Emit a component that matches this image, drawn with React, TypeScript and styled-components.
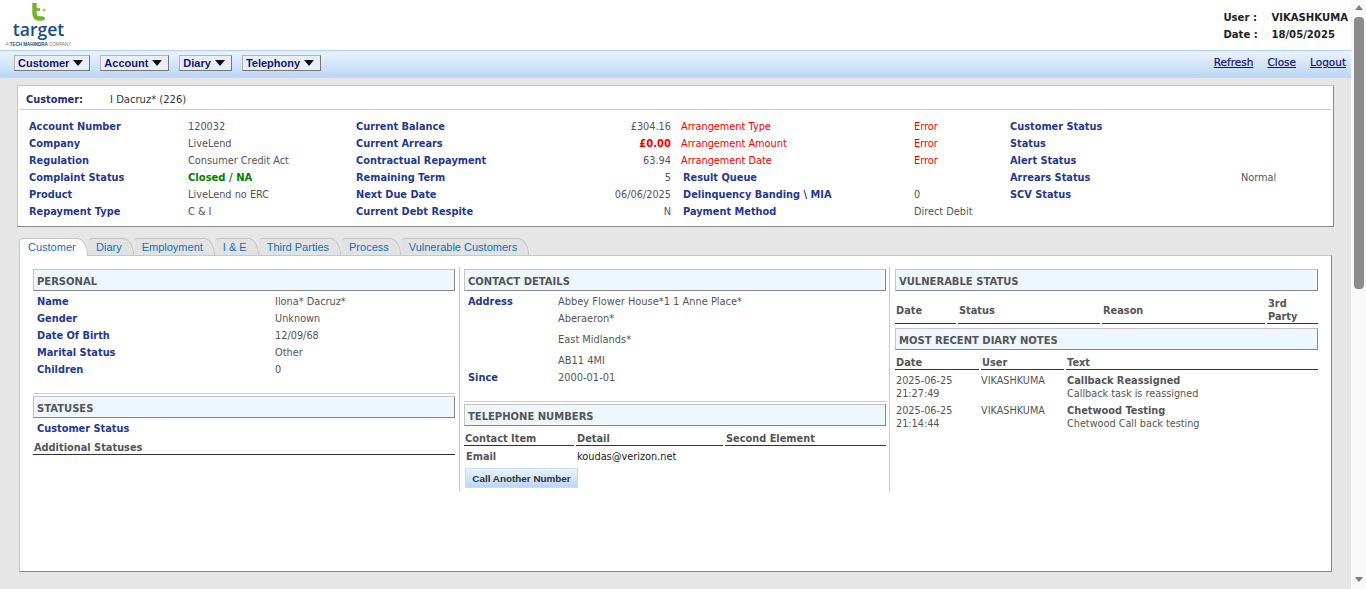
import React from "react";
import styled, { createGlobalStyle } from "styled-components";

const Global = createGlobalStyle`
  html, body { margin: 0; padding: 0; height: 589px; overflow: hidden; background: #fff; }
  #root { height: 589px; }
  * { box-sizing: border-box; }
`;
const F = `Tahoma, "DejaVu Sans", sans-serif`;

const Shell = styled.div`display: flex; height: 589px; width: 1366px; font-family: ${F}; font-size: 9.8px; color: #555;`;
const Main = styled.div`width: 1351px; display: flex; flex-direction: column; background: #e6e6e6;`;
const Scroll = styled.div`width: 15px; background: #f9f9f9; display: flex; flex-direction: column; align-items: center; padding: 5px 0 7px 0;`;
const Thumb = styled.div`width: 10px; height: 272px; margin-top: 7px; background: #8c8c8c; border-radius: 4px; flex: none;`;
const Arrow = styled.div<{ $down?: boolean }>`
  width: 0; height: 0; border-left: 4.5px solid transparent; border-right: 4.5px solid transparent;
  ${p => (p.$down ? "border-top: 5px solid #7c7c7c; margin-top: auto;" : "border-bottom: 5px solid #7c7c7c;")}
`;

const Head = styled.div`height: 50px; background: #fff; display: flex; justify-content: space-between; flex: none;`;
const Logo = styled.div`width: 77px; height: 50px; padding-top: 3px; display: flex; flex-direction: column; align-items: center;`;
const LogoWord = styled.div`font-family: "Open Sans", sans-serif; font-weight: 600; font-size: 17.5px; line-height: 17px; color: #16507f;`;
const LogoTag = styled.div`font-family: "Liberation Sans", sans-serif; font-size: 4.5px; line-height: 6px; color: #777; white-space: nowrap; margin-top: 4px; b { color: #16507f; }`;
const UserInfo = styled.div`padding: 9px 3px 0 0; display: grid; grid-template-columns: 36px 12px auto; grid-auto-rows: 17px; align-items: center; font-size: 10.1px; font-weight: 700; color: #222; white-space: nowrap;`;

const Nav = styled.div`height: 28px; background: linear-gradient(#eaf3fd, #bcd6f6); border-top: 1px solid #b2d0f5; display: flex; align-items: flex-start; justify-content: space-between; padding: 4px 5px 0 14px; flex: none;`;
const Menus = styled.div`display: flex; gap: 10px;`;
const Menu = styled.div`height: 16px; display: flex; align-items: center; gap: 4px; padding: 0 6px 0 3px; font: 700 11px "Liberation Sans", sans-serif; color: #14146e; background: #e8effa; border: 1px solid #b4b4b4; border-right-color: #777; border-bottom-color: #777;`;
const Tri = styled.span`width: 0; height: 0; border-left: 5px solid transparent; border-right: 5px solid transparent; border-top: 6px solid #111;`;
const Links = styled.div`display: flex; gap: 14px; padding-top: 1px;`;
const NavLink = styled.a`font: 400 10.5px ${F}; color: #14146e; text-decoration: underline; -webkit-text-stroke: 0.2px #14146e;`;

const Summary = styled.section`margin: 7px 17px 0 17px; height: 142px; background: #fff; border: 1px solid #c8c8c8; border-right-color: #888; border-bottom-color: #888; flex: none; padding: 0 2px;`;
const SumHead = styled.div`height: 24px; padding: 3px 0 0 6px; border-bottom: 1px solid #ccc; display: grid; grid-template-columns: 84px auto; justify-content: start; align-items: center; font-size: 10px; color: #333; b { color: #1e2f6e; font-size: 9.8px; }`;
const SumGrid = styled.div`display: grid; grid-template-columns: 159px 168px 232px 83px 243px 96px 231px 60px; padding: 8px 0 0 9px; grid-auto-rows: 17px; align-items: center; white-space: nowrap;`;
const L = styled.div<{ $pad?: number }>`font-weight: 700; color: #24398c; font-size: 9.8px; padding-left: ${p => p.$pad ?? 0}px;`;
const V = styled.div<{ $c?: string; $b?: boolean; $r?: boolean; $pad?: number }>`color: ${p => p.$c ?? "#555"}; font-weight: ${p => (p.$b ? 700 : 400)}; text-align: ${p => (p.$r ? "right" : "left")}; padding-left: ${p => p.$pad ?? 0}px; font-size: ${p => (p.$b ? 10 : 9.75)}px;`;

const Tabs = styled.div`display: flex; margin: 11px 0 0 19px; height: 17px; align-items: flex-end; flex: none; position: relative; z-index: 1;`;
const Tab = styled.div<{ $on?: boolean }>`
  font: 11px "Liberation Sans", sans-serif; color: #0a72c2; height: ${p => (p.$on ? 18 : 17)}px; display: flex; align-items: center;
  padding: ${p => (p.$on ? "0 11px 1px 8px" : "0 11px 1px 7px")}; background: ${p => (p.$on ? "#fff" : "#e2e2e2")};
  border: 1px solid #c6c6c6; border-left-color: ${p => (p.$on ? "#c6c6c6" : "transparent")}; border-bottom: none; border-radius: 4px 11px 0 0 / 4px 17px 0 0;
  ${p => (p.$on ? "margin-bottom:-1px; width: 69px;" : "")}
`;
const Panel = styled.section`margin: 0 19px; height: 317px; background: #fff; border: 1px solid #c8c8c8; border-right-color: #888; border-bottom-color: #888; padding: 13px 0 0 13px; display: grid; grid-template-columns: 426px 430px 429px; align-items: start; flex: none;`;
const Col = styled.div`height: 223px; padding-right: 4px;`;
const LineCol = styled.div<{ $l: number; $r: number }>`height: 225px; margin-top: -2px; padding: 2px ${p => p.$r}px 0 ${p => p.$l}px; border-left: 1px solid #ccc;`;
const SecTitle = styled.div<{ $mt?: number }>`height: 22px; margin-top: ${p => p.$mt ?? 0}px; padding: 2px 0 0 3px; line-height: 20px; background: #eef6fe; border: 1px solid #c4c4c4; border-right-color: #888; border-bottom-color: #888; font-weight: 700; font-size: 10px; color: #555;`;
const Row = styled.div<{ $w?: number; $pad?: number; $mt?: number }>`display: grid; grid-template-columns: ${p => p.$w ?? 238}px 1fr; height: 17px; align-items: center; padding-left: ${p => p.$pad ?? 4}px; margin-top: ${p => p.$mt ?? 0}px;`;
const Rows = styled.div`padding-top: 2px;`;
const Rule = styled.div<{ $mt?: number }>`border-top: 1px solid #ccc; margin-top: ${p => p.$mt ?? 15}px; padding-top: 2px;`;
const Ths = styled.div<{ $cols: string; $h?: number; $mt?: number }>`display: grid; grid-template-columns: ${p => p.$cols}; gap: 2px; height: ${p => p.$h ?? 20}px; margin-top: ${p => p.$mt ?? 0}px;`;
const Th = styled.div<{ $mid?: boolean }>`border-bottom: 1px solid #333; font-weight: 700; font-size: 9.8px; color: #555; line-height: 13px; ${p => (p.$mid ? "display: flex; align-items: center;" : "display: flex; align-items: flex-end;")} padding-left: 1px;`;
const ThStack = styled.span`display: block;`;
const RowHead = styled.span`font-weight: 700; font-size: 9.8px; color: #555;`;
const Note = styled.div`display: grid; grid-template-columns: 85px 86px 1fr; line-height: 13px; margin-top: 4px; color: #555; padding-left: 1px; font-size: 9.7px; b { font-size: 9.8px; }`;
const CallBtn = styled.button`display: block; margin: 3px 0 0 1px; width: 113px; height: 20px; padding: 0; border: 1px solid #c9dcf7; background: linear-gradient(#eaf3fd, #bcd6f6); font: 700 9.9px "Liberation Sans", sans-serif; color: #333;`;
const Addr = styled.div`display: grid; grid-template-columns: 90px 1fr; padding: 2px 0 0 4px;`;
const AddrLine = styled.div<{ $h?: number }>`height: ${p => p.$h ?? 17}px; display: flex; align-items: center; font-size: 9.85px;`;
const TinyMark = styled.svg`display: block; margin-left: 2px;`;

const sumRows = [
  ["Account Number","120032","Current Balance","£304.16","Arrangement Type","Error","Customer Status",""],
  ["Company","LiveLend","Current Arrears","£0.00","Arrangement Amount","Error","Status",""],
  ["Regulation","Consumer Credit Act","Contractual Repayment","63.94","Arrangement Date","Error","Alert Status",""],
  ["Complaint Status","Closed / NA","Remaining Term","5","Result Queue","","Arrears Status","Normal"],
  ["Product","LiveLend no ERC","Next Due Date","06/06/2025","Delinquency Banding \\ MIA","0","SCV Status",""],
  ["Repayment Type","C & I","Current Debt Respite","N","Payment Method","Direct Debit","",""],
];

const Mark = () => (
  <TinyMark width="9" height="11" viewBox="0 0 9 11" aria-hidden="true">
    <path d="M0.5 0.5L8 5.5L0.5 10.5" fill="none" stroke="#ddd" strokeWidth="1" strokeDasharray="1 1" />
  </TinyMark>
);

export default function App() {
  return (
    <Shell>
      <Global />
      <Main>
        <Head>
          <Logo>
            <svg width="16" height="18" viewBox="0 0 16 18" aria-label="logo">
              <path d="M3.5 0v10q0 5.5 5 5.5h3" fill="none" stroke="#72b32d" strokeWidth="4.4" />
              <path d="M3 6.5h6" stroke="#72b32d" strokeWidth="2.6" />
              <circle cx="13.2" cy="7" r="1.5" fill="#a7ce3c" />
              <circle cx="12" cy="15.5" r="1.9" fill="#72b32d" />
            </svg>
            <LogoWord>target</LogoWord>
            <LogoTag>A <b>TECH MAHINDRA</b> COMPANY</LogoTag>
          </Logo>
          <UserInfo>
            <span>User :</span><Mark /><span>VIKASHKUMA</span>
            <span>Date :</span><Mark /><span>18/05/2025</span>
          </UserInfo>
        </Head>
        <Nav>
          <Menus>
            {["Customer","Account","Diary","Telephony"].map(m => <Menu key={m}>{m}<Tri /></Menu>)}
          </Menus>
          <Links>
            <NavLink>Refresh</NavLink><NavLink>Close</NavLink><NavLink>Logout</NavLink>
          </Links>
        </Nav>
        <Summary>
          <SumHead><b>Customer:</b><span>I Dacruz* (226)</span></SumHead>
          <SumGrid>
            {sumRows.map((r, i) => (
              <React.Fragment key={i}>
                <L>{r[0]}</L>
                <V $c={i === 3 ? "#008000" : undefined} $b={i === 3}>{r[1]}</V>
                <L>{r[2]}</L>
                <V $r $c={i === 1 ? "#f00000" : undefined} $b={i === 1}>{r[3]}</V>
                {i < 3 ? <V $c="#f00000" $pad={10}>{r[4]}</V> : <L $pad={12}>{r[4]}</L>}
                <V $c={i < 3 ? "#f00000" : undefined}>{r[5]}</V>
                <L>{r[6]}</L>
                <V>{r[7]}</V>
              </React.Fragment>
            ))}
          </SumGrid>
        </Summary>
        <Tabs>
          {["Customer","Diary","Employment","I & E","Third Parties","Process","Vulnerable Customers"].map((t, i) => <Tab key={t} $on={i === 0}>{t}</Tab>)}
        </Tabs>
        <Panel>
          <Col>
            <SecTitle>PERSONAL</SecTitle>
            <Rows>
              <Row><L>Name</L><V>Ilona* Dacruz*</V></Row>
              <Row><L>Gender</L><V>Unknown</V></Row>
              <Row><L>Date Of Birth</L><V>12/09/68</V></Row>
              <Row><L>Marital Status</L><V>Other</V></Row>
              <Row><L>Children</L><V>0</V></Row>
            </Rows>
            <Rule />
            <SecTitle>STATUSES</SecTitle>
            <Row $mt={2}><L>Customer Status</L><V /></Row>
            <Ths $cols="1fr" $h={18}><Th>Additional Statuses</Th></Ths>
          </Col>
          <LineCol $l={4} $r={3}>
            <SecTitle>CONTACT DETAILS</SecTitle>
            <Addr>
              <AddrLine><L>Address</L></AddrLine>
              <div>
                <AddrLine>Abbey Flower House*1 1 Anne Place*</AddrLine>
                <AddrLine>Aberaeron*</AddrLine>
                <AddrLine $h={25}>East Midlands*</AddrLine>
                <AddrLine>AB11 4MI</AddrLine>
              </div>
              <AddrLine><L>Since</L></AddrLine>
              <AddrLine>2000-01-01</AddrLine>
            </Addr>
            <Rule />
            <SecTitle>TELEPHONE NUMBERS</SecTitle>
            <Ths $cols="110px 147px 1fr"><Th>Contact Item</Th><Th>Detail</Th><Th>Second Element</Th></Ths>
            <Row $w={111} $pad={2} $mt={2}><RowHead>Email</RowHead><V $c="#222">koudas@verizon.net</V></Row>
            <CallBtn>Call Another Number</CallBtn>
          </LineCol>
          <LineCol $l={5} $r={0}>
            <SecTitle>VULNERABLE STATUS</SecTitle>
            <Ths $cols="61px 142px 163px 1fr" $h={27} $mt={6}><Th $mid>Date</Th><Th $mid>Status</Th><Th $mid>Reason</Th><Th $mid><ThStack>3rd<br />Party</ThStack></Th></Ths>
            <SecTitle $mt={4}>MOST RECENT DIARY NOTES</SecTitle>
            <Ths $cols="84px 83px 1fr"><Th>Date</Th><Th>User</Th><Th>Text</Th></Ths>
            <Note><span>2025-06-25<br />21:27:49</span><span>VIKASHKUMA</span><span><b>Callback Reassigned</b><br />Callback task is reassigned</span></Note>
            <Note><span>2025-06-25<br />21:14:44</span><span>VIKASHKUMA</span><span><b>Chetwood Testing</b><br />Chetwood Call back testing</span></Note>
          </LineCol>
        </Panel>
      </Main>
      <Scroll><Arrow /><Thumb /><Arrow $down /></Scroll>
    </Shell>
  );
}
